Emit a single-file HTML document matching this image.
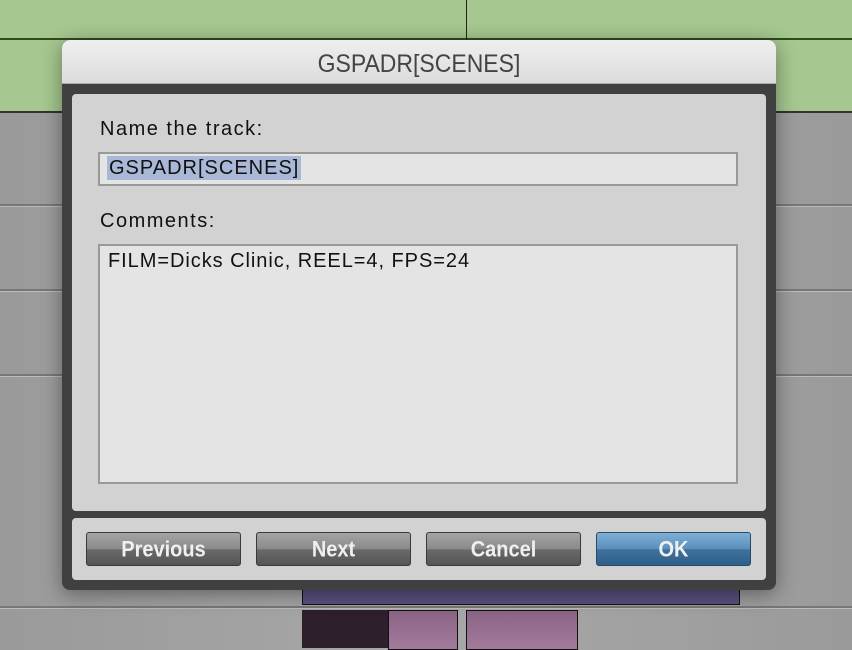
<!DOCTYPE html>
<html><head><style>
body{margin:0;width:852px;height:648px;overflow:hidden;position:relative;font-family:"Liberation Sans",sans-serif;background:linear-gradient(90deg,#9a9a9a,#a8a8a8 50%,#9a9a9a)}
.a{position:absolute}
.hl{position:absolute;left:0;width:852px;height:2px;background:#777;border-bottom:1px solid #bbb}
.btn{position:absolute;top:532px;width:153px;height:32px;border:1px solid #3a3a3a;border-radius:3px;background:linear-gradient(#a4a4a4,#8a8a8a 50%,#6a6a6a 52%,#555);color:#f0f0f0;font-weight:bold;font-size:20px;text-align:center;line-height:34px}
.btn span{display:inline-block;transform:scaleY(1.12)}
.lbl{position:absolute;left:100px;font-size:20px;letter-spacing:1.5px;color:#111}
</style></head><body>
<div class="a" style="left:0;top:0;width:852px;height:112px;background:#a6c78f"></div>
<div class="a" style="left:0;top:38px;width:852px;height:2px;background:#2f4a1f"></div>
<div class="a" style="left:0;top:111px;width:852px;height:2px;background:#333"></div>
<div class="a" style="left:466px;top:0;width:1px;height:40px;background:#222"></div>
<div class="hl" style="top:204px"></div>
<div class="hl" style="top:289px"></div>
<div class="hl" style="top:374px"></div>
<div class="hl" style="top:606px"></div>
<div class="a" style="left:302px;top:585px;width:436px;height:18px;background:#5a4f7e;border:1px solid #111"></div>
<div class="a" style="left:302px;top:610px;width:86px;height:38px;background:#2e1f2c"></div>
<div class="a" style="left:388px;top:610px;width:68px;height:38px;background:linear-gradient(#8a6484,#a27a9c);border:1px solid #111"></div>
<div class="a" style="left:466px;top:610px;width:110px;height:38px;background:linear-gradient(#8a6484,#a27a9c);border:1px solid #111"></div>
<div class="a" style="left:62px;top:40px;width:714px;height:550px;background:#404040;border-radius:8px;box-shadow:0 4px 20px rgba(0,0,0,.4)"></div>
<div class="a" style="left:62px;top:40px;width:714px;height:43px;background:linear-gradient(#efefef,#dcdcdc);border-radius:8px 8px 0 0;border-bottom:1px solid #aaa;text-align:center;line-height:46px;font-size:23px;color:#444"><span style="display:inline-block;transform:scaleY(1.1)">GSPADR[SCENES]</span></div>
<div class="a" style="left:72px;top:94px;width:694px;height:417px;background:#d2d2d2;border-radius:4px"></div>
<div class="lbl" style="top:118px">Name the track:</div>
<div class="a" style="left:98px;top:152px;width:636px;height:30px;background:#e4e4e4;border:2px solid #999"></div>
<div class="a" style="left:107px;top:156px;background:#a8b8d6;font-size:20px;letter-spacing:1px;color:#111;line-height:24px;padding:0 2px">GSPADR[SCENES]</div>
<div class="lbl" style="top:210px">Comments:</div>
<div class="a" style="left:98px;top:244px;width:636px;height:236px;background:#e4e4e4;border:2px solid #999"></div>
<div class="a" style="left:108px;top:250px;font-size:20px;letter-spacing:0.95px;color:#111">FILM=Dicks Clinic, REEL=4, FPS=24</div>
<div class="a" style="left:72px;top:518px;width:694px;height:62px;background:#d2d2d2;border-radius:4px"></div>
<div class="btn" style="left:86px"><span>Previous</span></div>
<div class="btn" style="left:256px"><span>Next</span></div>
<div class="btn" style="left:426px"><span>Cancel</span></div>
<div class="btn" style="left:596px;background:linear-gradient(#7fb0d6,#5a8fbb 50%,#3e719c 52%,#2f5f88);border-color:#274a68"><span>OK</span></div>
</body></html>
